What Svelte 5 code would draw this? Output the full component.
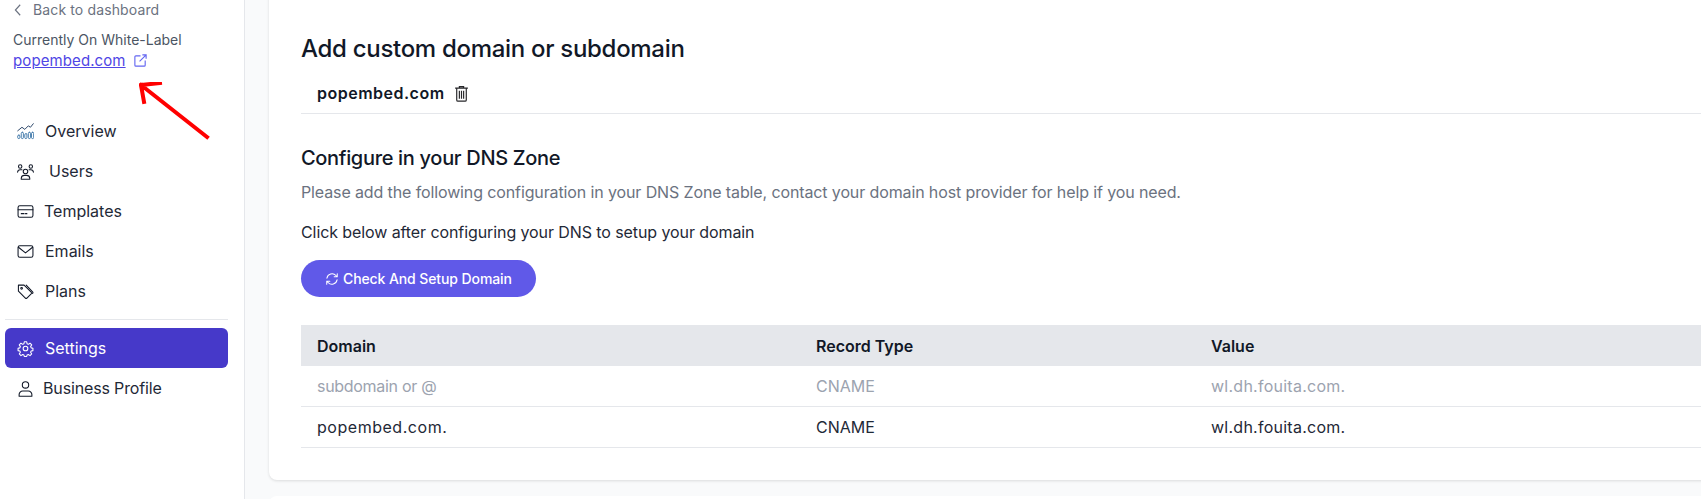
<script>
  const navTop = [
    { label: 'Overview', icon: 'chart', gap: 11 },
    { label: 'Users', icon: 'users', gap: 15 },
    { label: 'Templates', icon: 'card', gap: 10 },
    { label: 'Emails', icon: 'mail', gap: 11 },
    { label: 'Plans', icon: 'tag', gap: 11 }
  ];

  const rows = [
    { domain: 'subdomain or @', type: 'CNAME', value: 'wl.dh.fouita.com.', muted: true },
    { domain: 'popembed.com.', type: 'CNAME', value: 'wl.dh.fouita.com.', muted: false }
  ];
</script>

{#snippet navIcon(name)}
  <svg class="nav-icon" viewBox="0 0 24 24" fill="none" stroke="currentColor" stroke-width="1.5" stroke-linecap="round" stroke-linejoin="round">
    {#if name === 'chart'}
      <path d="M1 11l6-5 4 3 5-5 3 2 4-5" stroke="#1e3a5f" stroke-width="1.3" />
      <g stroke="#2c6aa0" stroke-width="1.2">
        <rect x="1" y="17" width="3" height="5" rx="1.5" />
        <rect x="6" y="13" width="3" height="9" rx="1.5" />
        <rect x="11" y="15" width="3" height="7" rx="1.5" />
        <rect x="16" y="13" width="3" height="9" rx="1.5" />
        <rect x="20.500" y="13" width="3" height="9" rx="1.5" />
      </g>
    {:else if name === 'users'}
      <circle cx="12" cy="12" r="3.2" />
      <path d="M6 23v-1.5a4.5 4.5 0 0 1 4.5-4h3a4.5 4.5 0 0 1 4.5 4V23H6z" />
      <circle cx="4.5" cy="5" r="2.4" />
      <circle cx="19.5" cy="5" r="2.4" />
      <path d="M0.8 13a4 4 0 0 1 3.7-3.6H7M23.2 13a4 4 0 0 0-3.7-3.6H17" />
    {:else if name === 'card'}
      <rect x="1.5" y="4" width="21" height="16" rx="2.5" />
      <path d="M1.5 9.5h21M6 15h4M12 15h2" />
    {:else if name === 'mail'}
      <rect x="1.5" y="4" width="21" height="16" rx="2.5" />
      <path d="M2 6l10 8 10-8" />
    {:else if name === 'tag'}
      <path d="M2 3h8l10 10a1.6 1.6 0 0 1 0 2.2l-6 6a1.6 1.6 0 0 1-2.2 0L2 11.500V3z" />
      <path d="M13 3l9 9.500a1.600 1.600 0 0 1 0 2.200" />
      <circle cx="6.500" cy="7.500" r="1.200" />
    {:else if name === 'gear'}
      <path d="M10.300 2.500h3.400l.5 2.800 1.800.8 2.400-1.600 2.400 2.400-1.600 2.400.8 1.800 2.500.5v3.400l-2.500.5-.8 1.800 1.600 2.400-2.400 2.400-2.400-1.600-1.800.8-.5 1.900h-3.400l-.5-1.900-1.800-.8-2.400 1.600-2.400-2.400 1.600-2.400-.8-1.800-2.500-.5v-3.400l2.500-.5.8-1.800-1.600-2.400 2.400-2.400 2.400 1.600 1.800-.8z" />
      <circle cx="12" cy="12" r="3.300" />
    {:else if name === 'person'}
      <circle cx="12" cy="7" r="4.500" />
      <path d="M3 23v-2.500a5 5 0 0 1 5-5h8a5 5 0 0 1 5 5V23z" />
    {/if}
  </svg>
{/snippet}

<div class="page">
  <aside class="sidebar">
    <div class="back">
      <svg class="chev" viewBox="0 0 10 16" fill="none" stroke="#6b7280" stroke-width="1.300"><path d="M7.500 2L2 8l5.500 6" /></svg>
      <span>Back to dashboard</span>
    </div>
    <div class="current">Currently On White-Label</div>
    <div class="site">
      <a href="#top">popembed.com </a>
      <svg class="ext" viewBox="0 0 16 16" fill="none" stroke="#6366f1" stroke-width="1.200"><path d="M8 3H3a1 1 0 0 0-1 1v9a1 1 0 0 0 1 1h9a1 1 0 0 0 1-1V8M7 9l7-7M10 2h4v4" /></svg>
    </div>

    <nav class="nav-top">
      {#each navTop as item}
        <div class="nav-item" style="gap: {item.gap}px">
          {@render navIcon(item.icon)}
          <span>{item.label}</span>
        </div>
      {/each}
    </nav>
    <hr />
    <div class="nav-item active">
      {@render navIcon('gear')}
      <span>Settings</span>
    </div>
    <div class="nav-item profile">
      {@render navIcon('person')}
      <span>Business Profile</span>
    </div>
  </aside>

  <main class="main">
    <section class="card">
      <h1>Add custom domain or subdomain</h1>
      <div class="domain-row">
        <span>popembed.com</span>
        <svg class="trash" viewBox="0 0 14 16" fill="none" stroke="#27272a" stroke-width="1.100"><path d="M1 3h12M5 3V1.500h4V3M2.500 3v11a1.200 1.200 0 0 0 1.200 1.200h6.600a1.200 1.200 0 0 0 1.200-1.200V3M5 5.500v7.500M7 5.500v7.500M9 5.500v7.500" /></svg>
      </div>

      <h2>Configure in your DNS Zone</h2>
      <p class="hint">Please add the following configuration in your DNS Zone table, contact your domain host provider for help if you need.</p>
      <p class="after">Click below after configuring your DNS to setup your domain</p>

      <button class="setup">
        <svg class="refresh" viewBox="0 0 16 16" fill="none" stroke="#fff" stroke-width="1.200" stroke-linecap="round" stroke-linejoin="round"><path d="M2.200 7a6 6 0 0 1 10.300-3l1.500 1.500M14 2v3.500h-3.500M13.800 9A6 6 0 0 1 3.500 12L2 10.500M2 14v-3.500h3.500" /></svg>
        Check And Setup Domain
      </button>

      <table>
        <thead>
          <tr><th class="c1">Domain</th><th class="c2">Record Type</th><th>Value</th></tr>
        </thead>
        <tbody>
          {#each rows as row}
            <tr class:muted={row.muted}>
              <td class="name">{row.domain}</td>
              <td class="type">{row.type}</td>
              <td class="value">{row.value}</td>
            </tr>
          {/each}
        </tbody>
      </table>
    </section>
    <div class="next-card"></div>
  </main>

  <svg class="arrow" width="90" height="70" viewBox="0 0 90 70" fill="none" stroke="#ff0000" stroke-width="4" stroke-linecap="square">
    <path d="M68 55L2 3M2 3L21 1M2 3L5 20" />
  </svg>
</div>

<style>
  :global(body) {
    margin: 0;
    overflow: hidden;
    background: #f9fafb;
  }

  .page {
    position: relative;
    display: flex;
    width: 1701px;
    height: 499px;
    overflow: hidden;
    font-family: "Inter", "Liberation Sans", sans-serif;
    color: #111827;
  }

  .sidebar {
    box-sizing: border-box;
    flex: 0 0 245px;
    padding: 0 16px 0 5px;
    background: #fff;
    border-right: 1px solid #e5e7eb;
  }

  .back {
    display: flex;
    align-items: center;
    gap: 10px;
    height: 19px;
    padding-left: 8px;
    font-size: 14px;
    color: #6b7280;
    letter-spacing: 0.13px;
  }

  .chev {
    width: 10px;
    height: 14px;
  }

  .current {
    margin-top: 11px;
    padding-left: 8px;
    font-size: 14px;
    line-height: 20px;
    color: #4b5563;
  }

  .site {
    display: flex;
    align-items: center;
    height: 21px;
    padding-left: 8px;
    font-size: 15px;
    letter-spacing: 0.1px;
  }

  .site a {
    color: #4f46e5;
    white-space: pre;
  }

  .ext {
    width: 15px;
    height: 15px;
    margin-left: 7px;
  }

  .nav-top {
    margin-top: 40px;
  }

  .nav-item {
    display: flex;
    align-items: center;
    gap: 11px;
    height: 40px;
    padding-left: 12px;
    font-size: 16px;
    color: #1f2937;
    border-radius: 6px;
  }

  .nav-icon {
    flex: none;
    width: 17px;
    height: 17px;
    color: #111827;
  }

  hr {
    margin: 8px 0;
    border: 0;
    border-top: 1px solid #e5e7eb;
  }

  .active {
    background: #4639c9;
    color: #fff;
  }

  .active .nav-icon {
    color: #fff;
  }

  .profile {
    gap: 9px;
    letter-spacing: -0.15px;
  }

  .main {
    flex: 1;
    min-width: 0;
    margin-top: -20px;
    padding-left: 24px;
    overflow: hidden;
  }

  .card {
    box-sizing: border-box;
    width: 1500px;
    height: 500px;
    padding: 53px 32px 0;
    background: #fff;
    border-radius: 8px;
    box-shadow: 0 1px 3px rgba(0, 0, 0, 0.12);
  }

  h1 {
    margin: 0;
    font-size: 24px;
    line-height: 32px;
    font-weight: 500;
    letter-spacing: -0.3px;
  }

  .domain-row {
    display: flex;
    align-items: center;
    gap: 9px;
    box-sizing: border-box;
    height: 49px;
    padding: 8px 0 0 16px;
    font-size: 16px;
    font-weight: 600;
    letter-spacing: 0.5px;
    border-bottom: 1px solid #e5e7eb;
  }

  .trash {
    width: 15px;
    height: 17px;
  }

  h2 {
    margin: 30px 0 0;
    font-size: 20px;
    line-height: 28px;
    font-weight: 500;
    letter-spacing: -0.32px;
  }

  .hint {
    margin: 8px 0 0;
    font-size: 16px;
    line-height: 24px;
    color: #6b7280;
    letter-spacing: -0.12px;
  }

  .after {
    margin: 16px 0 0;
    font-size: 16px;
    line-height: 24px;
    color: #1f2937;
    letter-spacing: -0.09px;
  }

  .setup {
    display: flex;
    align-items: center;
    gap: 4px;
    height: 37px;
    margin-top: 16px;
    padding: 0 24px;
    font: inherit;
    font-size: 14px;
    font-weight: 500;
    letter-spacing: -0.1px;
    color: #fff;
    background: #6059e8;
    border: 0;
    border-radius: 19px;
  }

  .refresh {
    width: 14px;
    height: 14px;
  }

  table {
    width: 100%;
    margin-top: 28px;
    border-collapse: collapse;
    table-layout: fixed;
    font-size: 16px;
  }

  th {
    height: 41px;
    padding: 0 16px;
    font-weight: 600;
    text-align: left;
    background: #e5e7eb;
  }

  .c1 {
    width: 467px;
  }

  .c2 {
    width: 363px;
  }

  td {
    height: 40px;
    padding: 0 16px;
    border-bottom: 1px solid #e5e7eb;
    color: #1f2937;
  }

  .name {
    letter-spacing: 0.53px;
  }

  .value {
    letter-spacing: 0.25px;
  }

  .muted .name {
    letter-spacing: -0.3px;
  }

  .muted td {
    color: #9ca3af;
  }

  .next-card {
    width: 1500px;
    height: 20px;
    margin-top: 16px;
    background: #fff;
    border-radius: 8px;
  }

  .arrow {
    position: absolute;
    left: 139px;
    top: 82px;
  }
</style>
